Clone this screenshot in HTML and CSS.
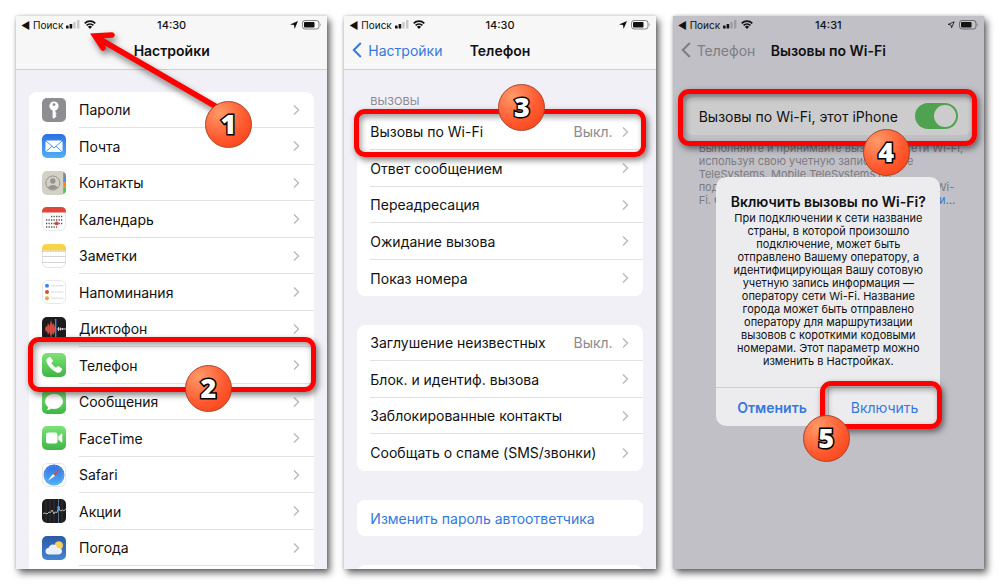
FILE: index.html
```
<!DOCTYPE html>
<html lang="ru">
<head>
  <meta charset="UTF-8" />
  <meta name="viewport" content="width=device-width, initial-scale=1.0" />
  <title>Вызовы по Wi-Fi</title>
  <link rel="stylesheet" href="styles.css">
</head>
<body>

  <!-- Общие иконки -->
  <svg class="sprite" aria-hidden="true">
    <defs>
      <linearGradient id="green" x1="0" y1="0" x2="0" y2="1"><stop offset="0" stop-color="#7be376"/><stop offset="1" stop-color="#3fb646"/></linearGradient>
      <linearGradient id="blue" x1="0" y1="0" x2="0" y2="1"><stop offset="0" stop-color="#2f6fe4"/><stop offset="1" stop-color="#4fb0f3"/></linearGradient>
      <linearGradient id="sky" x1="0" y1="0" x2="0" y2="1"><stop offset="0" stop-color="#2c5aa8"/><stop offset="1" stop-color="#4583d2"/></linearGradient>
    </defs>
    <symbol id="chevron" viewBox="0 0 7 12"><path d="M1 1.5 5.5 6 1 10.5" fill="none" stroke="currentColor" stroke-width="1.5"/></symbol>
    <symbol id="back" viewBox="0 0 10 16"><path d="M8.8 1 1.8 8l7 7" fill="none" stroke="currentColor" stroke-width="2"/></symbol>
    <symbol id="signal" viewBox="0 0 14 9">
      <rect x="0" y="5.5" width="2.6" height="3" rx=".6"/><rect x="3.6" y="4" width="2.6" height="4.5" rx=".6"/>
      <rect x="7.3" y="2" width="2.4" height="6.5" rx=".6" opacity=".2"/><rect x="11" y="0" width="2.4" height="8.5" rx=".6" opacity=".2"/>
    </symbol>
    <symbol id="wifi" viewBox="0 0 12 9">
      <path d="M.7 3.3a7.6 7.6 0 0 1 10.6 0M2.6 5.4a4.9 4.9 0 0 1 6.8 0" fill="none" stroke="currentColor" stroke-width="1.7"/>
      <path d="M6 9 3.9 6.8a3 3 0 0 1 4.2 0z"/>
    </symbol>
    <symbol id="geo" viewBox="0 0 8 8"><path d="M8 0 4.6 8 4 4 0 3.6z"/></symbol>
    <symbol id="geo-line" viewBox="0 0 8 8"><path d="M7.2.8 4.6 6.8 4 4 1.2 3.4z" fill="none" stroke="currentColor" stroke-width=".8"/></symbol>
    <symbol id="battery" viewBox="0 0 20 10">
      <rect x=".5" y=".5" width="16.5" height="8.500" rx="2.500" fill="none" stroke="currentColor" opacity=".5"/>
      <rect x="2" y="2" width="10.500" height="5.500" rx="1"/><path d="M18.300 3.200q1.400 1.500 0 3z" opacity=".5"/>
    </symbol>
  </svg>

  <main class="board">

    <!-- Экран 1: Настройки -->
    <section class="phone">
      <div class="screen">
        <header class="top">
          <div class="status">
            <span class="status-left">◀ Поиск <svg class="signal"><use href="#signal"/></svg><svg class="wifi"><use href="#wifi"/></svg></span>
            <span class="time">14:30</span>
            <span class="status-right"><svg class="geo"><use href="#geo"/></svg><svg class="battery"><use href="#battery"/></svg></span>
          </div>
          <div class="nav"><h1>Настройки</h1></div>
        </header>

        <nav class="card icons first">
          <a class="row" href="#"><svg class="app" viewBox="0 0 24 24"><rect width="24" height="24" rx="5" fill="#8e8e92"/><circle cx="12" cy="8" r="4.6" fill="#fff"/><circle cx="12" cy="6.6" r="1.4" fill="#8e8e92"/><path d="M10.6 11h2.8v3.2l1.3 1.2-1.3 1.3 1.3 1.3-1.3 1.2L12 20.8l-1.4-1.4z" fill="#fff"/></svg><span>Пароли</span><svg class="chevron"><use href="#chevron"/></svg></a>
          <a class="row" href="#"><svg class="app" viewBox="0 0 24 24"><rect width="24" height="24" rx="5" fill="url(#blue)"/><rect x="3.5" y="6.5" width="17" height="11.5" rx="1.5" fill="#fff"/><path d="m4 7 8 7 8-7M4 17.6l6-5.3M20 17.6l-6-5.3" fill="none" stroke="#4a94ea" stroke-width="1"/></svg><span>Почта</span><svg class="chevron"><use href="#chevron"/></svg></a>
          <a class="row" href="#"><svg class="app" viewBox="0 0 24 24"><rect width="24" height="24" rx="5" fill="#d3d0c5"/><path d="M21.2 1.2Q24 2 24 5v1h-2.8z" fill="#8a8a8a"/><path fill="#4990e8" d="M21.2 6H24v5h-2.8z"/><path fill="#ee8a2f" d="M21.2 11H24v5.5h-2.8z"/><path d="M21.2 16.5H24V19q0 3-2.8 3.9z" fill="#53bd57"/><circle cx="10.8" cy="12" r="7" fill="none" stroke="#96938d"/><circle cx="10.8" cy="10" r="2.7" fill="#96938d"/><path d="M5.8 16.3q5-4.6 10 0-5 4.6-10 0z" fill="#96938d"/></svg><span>Контакты</span><svg class="chevron"><use href="#chevron"/></svg></a>
          <a class="row" href="#"><svg class="app" viewBox="0 0 24 24"><rect x=".5" y=".5" width="23" height="23" rx="5" fill="#fff" stroke="#e8e8e8"/><path d="M0 5.6V5q0-5 5-5h14q5 0 5 5v.6z" fill="#e0453a"/><path d="M9 9.5h12M4 13h17M4 16.5h17M4 20h11" stroke="#555" stroke-width="1.3" stroke-dasharray="1.3 1.2"/><circle cx="14.7" cy="16.4" r="1.9" fill="#e83c34"/></svg><span>Календарь</span><svg class="chevron"><use href="#chevron"/></svg></a>
          <a class="row" href="#"><svg class="app" viewBox="0 0 24 24"><rect x=".5" y=".5" width="23" height="23" rx="5" fill="#fff" stroke="#e4e4e4"/><path d="M0 6.5V5q0-5 5-5h14q5 0 5 5v1.5z" fill="#f8d34a"/><path d="M0 7.2h24" stroke="#b9a98b" stroke-dasharray="1 .6"/><path d="M0 12.5h24M0 18.5h24" stroke="#d4d4d6"/></svg><span>Заметки</span><svg class="chevron"><use href="#chevron"/></svg></a>
          <a class="row" href="#"><svg class="app" viewBox="0 0 24 24"><rect x=".5" y=".5" width="23" height="23" rx="5" fill="#fff" stroke="#e8e8ea"/><circle cx="5" cy="5.8" r="2" fill="#3b86f2"/><circle cx="5" cy="12" r="2" fill="#de4a3c"/><circle cx="5" cy="18.2" r="2" fill="#f1a33b"/><path d="M9 5.8h12.5M9 12h12.5M9 18.2h12.5" stroke="#dcdcde"/></svg><span>Напоминания</span><svg class="chevron"><use href="#chevron"/></svg></a>
          <a class="row" href="#"><svg class="app" viewBox="0 0 24 24"><rect width="24" height="24" rx="5" fill="#1c1c1e"/><path d="M1 12h2l1-3 1 1 1-4 1.5 3L9 3l1.5 5 1-2 1.5 4v4l-1.5 4-1-2L9 21l-1.5-6L6 18l-1-4-1 1-1-3z" fill="#cf4b40"/><path d="M15 12h9M16.500 10v4M18.500 10.500v3M20.500 11v2" stroke="#ddd" stroke-width=".9"/><path d="M13.700 2v20" stroke="#4a8eea" stroke-width="1.300"/></svg><span>Диктофон</span><svg class="chevron"><use href="#chevron"/></svg></a>
          <a class="row" href="#"><svg class="app" viewBox="0 0 24 24"><rect width="24" height="24" rx="5" fill="url(#green)"/><path d="M5 5.500 7.300 4q.8-.4 1.400.4l2 2.800q.5.800-.2 1.500l-1.300 1.200q1.900 3 4.900 4.900l1.200-1.300q.7-.7 1.500-.2l2.800 2q.8.600.4 1.400L18.500 19q-1.500 1.400-4.300.2Q8 16.300 4.800 9.800 3.600 7 5 5.500z" fill="#fff"/></svg><span>Телефон</span><svg class="chevron"><use href="#chevron"/></svg></a>
          <a class="row" href="#"><svg class="app" viewBox="0 0 24 24"><rect width="24" height="24" rx="5" fill="url(#green)"/><ellipse cx="12" cy="11.300" rx="9" ry="7.600" fill="#fff"/><path d="M6.500 16q.3 2.500-1.800 4 3.300.2 5-2z" fill="#fff"/></svg><span>Сообщения</span><svg class="chevron"><use href="#chevron"/></svg></a>
          <a class="row" href="#"><svg class="app" viewBox="0 0 24 24"><rect width="24" height="24" rx="5" fill="url(#green)"/><rect x="4" y="6.500" width="11.500" height="11" rx="2.300" fill="#fff"/><path d="m16.300 10.500 3-2.700q1-.7 1 .4v7.600q0 1.100-1 .4l-3-2.700z" fill="#fff"/></svg><span>FaceTime</span><svg class="chevron"><use href="#chevron"/></svg></a>
          <a class="row" href="#"><svg class="app" viewBox="0 0 24 24"><rect x=".5" y=".5" width="23" height="23" rx="5" fill="#fff" stroke="#e6e6e8"/><circle cx="12" cy="12" r="10.500" fill="url(#blue)"/><circle cx="12" cy="12" r="9" fill="none" stroke="#a9cdf8" stroke-width="1" stroke-dasharray=".5 1.400"/><path d="m18.500 6-5.500 7-2-2z" fill="#e8473c"/><path d="m5.500 18 5.500-7 2 2z" fill="#fff"/></svg><span>Safari</span><svg class="chevron"><use href="#chevron"/></svg></a>
          <a class="row" href="#"><svg class="app" viewBox="0 0 24 24"><rect width="24" height="24" rx="5" fill="#1c1c1e"/><path d="M4 1v22M8 0v24M12 0v24M20 1v22" stroke="#333"/><path d="M16.500 0v24" stroke="#55708a"/><path d="m1 14.500 2-.5 2 1 2-2 1.500.500L10 11l2 4 1-2 2 .5L16.500 9l2 3 2-1 1.500 1 2-2.500" fill="none" stroke="#d8d8d8" stroke-width=".8"/><circle cx="16.500" cy="8.500" r="1.500" fill="#4a9bf0"/></svg><span>Акции</span><svg class="chevron"><use href="#chevron"/></svg></a>
          <a class="row" href="#"><svg class="app" viewBox="0 0 24 24"><rect width="24" height="24" rx="5" fill="url(#sky)"/><circle cx="16.800" cy="9.500" r="4.200" fill="#f7cf55"/><path d="M7.500 18.500q-4 0-4-3.300 0-2.800 3-3.200Q7.800 8.500 11 8.500q3.500 0 4.300 3.200 4.700.3 4.700 3.400 0 3.400-4 3.400z" fill="#eaf0f8"/></svg><span>Погода</span><svg class="chevron"><use href="#chevron"/></svg></a>
          <a class="row" href="#"><span></span></a>
        </nav>
      </div>

      <!-- Отметки 1 и 2 -->
      <svg class="arrow" viewBox="0 0 150 100" aria-hidden="true"><path d="M138 90 19 21M26 32 18 20l17-1" fill="none" stroke="#f00" stroke-width="5.500" stroke-linecap="round" stroke-linejoin="miter"/></svg>
      <div class="frame frame-phone"></div>
      <b class="badge badge-1">1</b>
      <b class="badge badge-2">2</b>
    </section>

    <!-- Экран 2: Телефон -->
    <section class="phone">
      <div class="screen">
        <header class="top">
          <div class="status">
            <span class="status-left">◀ Поиск <svg class="signal"><use href="#signal"/></svg><svg class="wifi"><use href="#wifi"/></svg></span>
            <span class="time">14:30</span>
            <span class="status-right"><svg class="geo"><use href="#geo"/></svg><svg class="battery"><use href="#battery"/></svg></span>
          </div>
          <div class="nav">
            <a class="back" href="#"><svg><use href="#back"/></svg>Настройки</a>
            <h1>Телефон</h1>
          </div>
        </header>

        <h2 class="label">ВЫЗОВЫ</h2>
        <nav class="card">
          <a class="row" href="#"><span>Вызовы по Wi-Fi</span><em>Выкл.</em><svg class="chevron"><use href="#chevron"/></svg></a>
          <a class="row" href="#"><span>Ответ сообщением</span><svg class="chevron"><use href="#chevron"/></svg></a>
          <a class="row" href="#"><span>Переадресация</span><svg class="chevron"><use href="#chevron"/></svg></a>
          <a class="row" href="#"><span>Ожидание вызова</span><svg class="chevron"><use href="#chevron"/></svg></a>
          <a class="row" href="#"><span>Показ номера</span><svg class="chevron"><use href="#chevron"/></svg></a>
        </nav>
        <nav class="card">
          <a class="row" href="#"><span>Заглушение неизвестных</span><em>Выкл.</em><svg class="chevron"><use href="#chevron"/></svg></a>
          <a class="row" href="#"><span>Блок. и идентиф. вызова</span><svg class="chevron"><use href="#chevron"/></svg></a>
          <a class="row" href="#"><span>Заблокированные контакты</span><svg class="chevron"><use href="#chevron"/></svg></a>
          <a class="row" href="#"><span>Сообщать о спаме (SMS/звонки)</span><svg class="chevron"><use href="#chevron"/></svg></a>
        </nav>
        <nav class="card"><a class="row action" href="#"><span>Изменить пароль автоответчика</span></a></nav>
        <nav class="card"><a class="row" href="#"><span></span></a></nav>
      </div>

      <!-- Отметка 3 -->
      <div class="frame frame-calls"></div>
      <b class="badge badge-3">3</b>
    </section>

    <!-- Экран 3: Вызовы по Wi-Fi -->
    <section class="phone">
      <div class="screen dimmed">
        <header class="top">
          <div class="status">
            <span class="status-left">◀ Поиск <svg class="signal"><use href="#signal"/></svg><svg class="wifi"><use href="#wifi"/></svg></span>
            <span class="time">14:31</span>
            <span class="status-right"><svg class="geo"><use href="#geo-line"/></svg><svg class="battery"><use href="#battery"/></svg></span>
          </div>
          <div class="nav">
            <a class="back" href="#"><svg><use href="#back"/></svg>Телефон</a>
            <h1>Вызовы по Wi-Fi</h1>
          </div>
        </header>

        <div class="card switch-card">
          <label class="row" for="wifi-calls"><span>Вызовы по Wi-Fi, этот iPhone</span><input class="switch" type="checkbox" id="wifi-calls" checked></label>
        </div>
        <p class="note">Выполняйте и принимайте вызовы по сети Wi-Fi,<br>используя свою учетную запись Mobile<br>TeleSystems. Mobile TeleSystems не<br>поддерживает экстренные вызовы по сети Wi-<br>Fi. <a href="#">О вызовах по Wi-Fi и конфиденциальности…</a></p>
      </div>

      <div class="alert" role="alertdialog" aria-labelledby="alert-title">
        <div class="alert-body">
          <h2 id="alert-title">Включить вызовы по Wi-Fi?</h2>
          <p>При подключении к сети название<br>страны, в которой произошло<br>подключение, может быть<br>отправлено Вашему оператору, а<br>идентифицирующая Вашу сотовую<br>учетную запись информация —<br>оператору сети Wi-Fi. Название<br>города может быть отправлено<br>оператору для маршрутизации<br>вызовов с короткими кодовыми<br>номерами. Этот параметр можно<br>изменить в Настройках.</p>
        </div>
        <div class="alert-buttons">
          <button type="button" class="cancel">Отменить</button>
          <button type="button">Включить</button>
        </div>
      </div>

      <!-- Отметки 4 и 5 -->
      <div class="frame frame-switch"></div>
      <div class="frame frame-enable"></div>
      <b class="badge badge-4">4</b>
      <b class="badge badge-5">5</b>
    </section>

  </main>

</body>
</html>
```
FILE: styles.css
```
* {
  box-sizing: border-box;
}

body {
  margin: 0;
  background: #fff;
  color: #111;
  font-family: Inter, "Liberation Sans", sans-serif;
  font-size: 14px;
}

h1, h2, p {
  margin: 0;
}

a {
  color: inherit;
  text-decoration: none;
}

svg {
  flex: none;
  fill: currentColor;
}

.sprite {
  position: absolute;
  width: 0;
  height: 0;
}

.board {
  display: flex;
  gap: 17px;
  height: 100vh;
  padding: 16px;
}

/* Телефон */
.phone {
  position: relative;
  flex: 1;
  min-width: 0;
  box-shadow: 3px 4px 7px rgba(0, 0, 0, 0.6), 0 0 3px rgba(0, 0, 0, 0.2);
}

.screen {
  height: 100%;
  overflow: hidden;
  background: #f1f0f6;
}

.top {
  height: 54px;
  background: #f7f7f8;
  border-bottom: 1px solid #cfcfd2;
}

.status {
  display: grid;
  grid-template-columns: 1fr auto 1fr;
  align-items: center;
  height: 17px;
  padding: 0 5px;
  font-size: 10px;
}

.status-left,
.status-right {
  display: flex;
  align-items: center;
}

.status-left {
  white-space: pre;
}

.status-right {
  justify-content: flex-end;
  gap: 4px;
}

.time {
  font-size: 11px;
  font-weight: 500;
}

.signal {
  width: 14px;
  height: 9px;
}

.wifi {
  width: 12px;
  height: 9px;
  margin-left: 4px;
}

.geo {
  width: 8px;
  height: 8px;
}

.battery {
  width: 20px;
  height: 10px;
}

.nav {
  display: grid;
  grid-template-columns: 1fr auto 1fr;
  align-items: center;
  height: 34px;
  padding: 0 8px;
}

.nav h1 {
  grid-column: 2;
  font-size: 14px;
  font-weight: 600;
}

.back {
  display: flex;
  align-items: center;
  gap: 6px;
  color: #3478e0;
}

.back svg {
  width: 10px;
  height: 16px;
}

/* Списки */
.label {
  padding: 24px 26px 5px;
  color: #88878d;
  font-size: 11px;
  font-weight: 400;
  line-height: 15px;
}

.card {
  margin: 0 13px 29px;
  padding-left: 13px;
  background: #fff;
  border-radius: 8px;
}

.first {
  margin-top: 22px;
}

.row {
  display: flex;
  align-items: center;
  height: 36px;
  padding-right: 14px;
  border-bottom: 1px solid #e2e2e4;
}

.row:nth-child(even) {
  height: 37px;
}

.row:last-child {
  border-bottom: 0;
}

.row span {
  flex: 1;
  white-space: nowrap;
}

.row em {
  margin-right: 9px;
  color: #8b8b8f;
  font-style: normal;
}

.chevron {
  width: 7px;
  height: 12px;
  color: #bcbcc0;
}

.icons {
  padding-left: 50px;
}

.app {
  width: 24px;
  height: 24px;
  margin-left: -37px;
  margin-right: 13px;
}

.action {
  color: #3478e0;
}

/* Затемнённый экран */
.dimmed {
  background: #c1c0c6;
}

.dimmed .top {
  background: none;
  border-color: transparent;
}

.dimmed .back {
  color: #7d7d83;
}

.switch-card {
  margin: 27px 13px 7px;
  background: #cdcccd;
}

.switch-card .row {
  height: 38px;
  padding-right: 13px;
}

.switch {
  appearance: none;
  display: flex;
  width: 43px;
  height: 26px;
  margin: 0;
  padding: 2px;
  border-radius: 13px;
  background: #999;
}

.switch::before {
  content: "";
  width: 22px;
  height: 22px;
  border-radius: 50%;
  background: #cdcccd;
}

.switch:checked {
  justify-content: flex-end;
  background: #4fa350;
}

.note {
  padding-left: 26px;
  color: #7b7a80;
  font-size: 11px;
  line-height: 13px;
  white-space: nowrap;
}

.note a {
  color: #3b74c4;
}

/* Диалог */
.alert {
  position: absolute;
  top: 161px;
  left: 50%;
  width: 224px;
  transform: translateX(-50%);
  border-radius: 10px;
  background: #ececef;
  text-align: center;
}

.alert-body {
  padding: 15px 0 19px;
  white-space: nowrap;
}

.alert h2 {
  font-size: 14px;
  font-weight: 600;
  line-height: 20px;
}

.alert p {
  font-size: 11px;
  line-height: 13px;
}

.alert-buttons {
  display: flex;
  border-top: 1px solid #cfcfd3;
}

.alert button {
  flex: 1;
  height: 38px;
  padding: 0;
  border: 0;
  background: none;
  color: #3478e0;
  font: inherit;
}

.alert button + button {
  border-left: 1px solid #cfcfd3;
}

.alert .cancel {
  font-weight: 600;
}

/* Красные рамки, стрелка и номера шагов */
.frame {
  position: absolute;
  border: 5px solid #f00;
  border-radius: 11px;
  box-shadow: 2px 3px 6px rgba(0, 0, 0, 0.5), inset 2px 3px 6px rgba(0, 0, 0, 0.4);
}

.frame-phone {
  top: 321px;
  left: 12px;
  right: 11px;
  height: 55px;
}

.frame-calls {
  top: 93px;
  left: 10px;
  right: 10px;
  height: 48px;
}

.frame-switch {
  top: 73px;
  left: 5px;
  right: 7px;
  height: 57px;
}

.frame-enable {
  top: 365px;
  left: calc(50% - 8px);
  width: 122px;
  height: 48px;
}

.arrow {
  position: absolute;
  top: 0;
  left: 61px;
  width: 150px;
  height: 100px;
  filter: drop-shadow(2px 4px 3px rgba(0, 0, 0, 0.5));
}

.badge {
  position: absolute;
  width: 47px;
  height: 47px;
  border: 1px solid #a8452c;
  border-radius: 50%;
  background: radial-gradient(circle at 30% 25%, #ff9a68, #ff5a30 55%, #f83a10);
  color: #fff;
  font-family: "Open Sans", "Noto Sans", sans-serif;
  font-size: 27px;
  font-weight: 800;
  line-height: 43px;
  text-align: center;
  -webkit-text-stroke: 3px #000;
  paint-order: stroke fill;
}

.badge-1 {
  top: 85px;
  left: 189px;
}

.badge-2 {
  top: 349px;
  left: 169px;
}

.badge-3 {
  top: 68px;
  left: 154px;
}

.badge-4 {
  top: 113px;
  left: 190px;
}

.badge-5 {
  top: 399px;
  left: 130px;
}
```
